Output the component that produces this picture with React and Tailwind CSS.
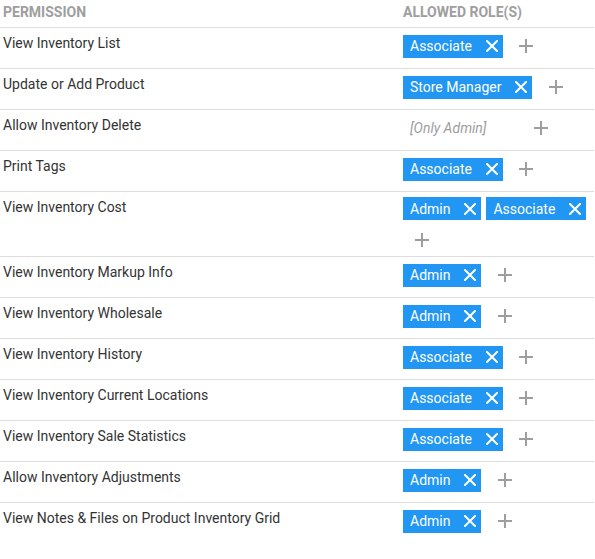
import React from "react";

const rows = [
  ["View Inventory List", ["Associate"]],
  ["Update or Add Product", ["Store Manager"]],
  ["Allow Inventory Delete", null],
  ["Print Tags", ["Associate"]],
  ["View Inventory Cost", ["Admin", "Associate"]],
  ["View Inventory Markup Info", ["Admin"]],
  ["View Inventory Wholesale", ["Admin"]],
  ["View Inventory History", ["Associate"]],
  ["View Inventory Current Locations", ["Associate"]],
  ["View Inventory Sale Statistics", ["Associate"]],
  ["Allow Inventory Adjustments", ["Admin"]],
  ["View Notes & Files on Product Inventory Grid", ["Admin"]],
];

function XIcon() {
  return (
    <svg width="12" height="12" viewBox="0 0 12 12" className="block">
      <path d="M1 1L11 11M11 1L1 11" stroke="white" strokeWidth="2" strokeLinecap="square" />
    </svg>
  );
}

function Plus() {
  return (
    <div className="w-[37px] h-[26px] flex items-center justify-center">
      <svg width="14" height="14" viewBox="0 0 14 14" className="block">
        <path d="M7 0V14M0 7H14" stroke="#9e9e9e" strokeWidth="2" />
      </svg>
    </div>
  );
}

function Chip({ label }) {
  return (
    <div className="h-[23px] bg-[#2196f3] flex items-center pl-[7px] pr-[5px] text-white text-[14px] leading-[20px]">
      <span>{label}</span>
      <span className="ml-[14px]">
        <XIcon />
      </span>
    </div>
  );
}

function Placeholder() {
  return (
    <div className="h-[23px] flex items-center pl-[7px] pr-[5px] text-[#9e9e9e] italic text-[14px] leading-[20px]">
      <span>[Only Admin]</span>
      <span className="ml-[14px] w-[12px] h-[12px]" />
    </div>
  );
}

export default function App() {
  return (
    <div
      className="w-[595px] bg-white"
      style={{ fontFamily: "Roboto, 'Liberation Sans', sans-serif" }}
    >
      <div className="flex h-[28px] border-b border-[#dddddd] w-[594px] text-[14px] leading-[18px] font-bold text-[#9e9e9e] uppercase">
        <div className="w-[400px] pl-[3px] pt-[3px]">Permission</div>
        <div className="flex-1 pl-[3px] pt-[3px]">Allowed Role(s)</div>
      </div>
      {rows.map(([name, roles], i) => (
        <div
          key={i}
          className={
            "flex w-[594px] " + (i < rows.length - 1 ? "border-b border-[#dddddd]" : "")
          }
        >
          <div className="w-[400px] pl-[3px] pt-[5px] text-[14px] leading-[20px] text-[#333333]">
            {name}
          </div>
          <div className="flex-1 pl-[3px] min-h-[40px] pt-[5px] pb-[3px] flex flex-wrap content-start items-center gap-x-[5px] gap-y-[7px]">
            {roles ? roles.map((r) => <Chip key={r} label={r} />) : <Placeholder />}
            <Plus />
          </div>
        </div>
      ))}
    </div>
  );
}
